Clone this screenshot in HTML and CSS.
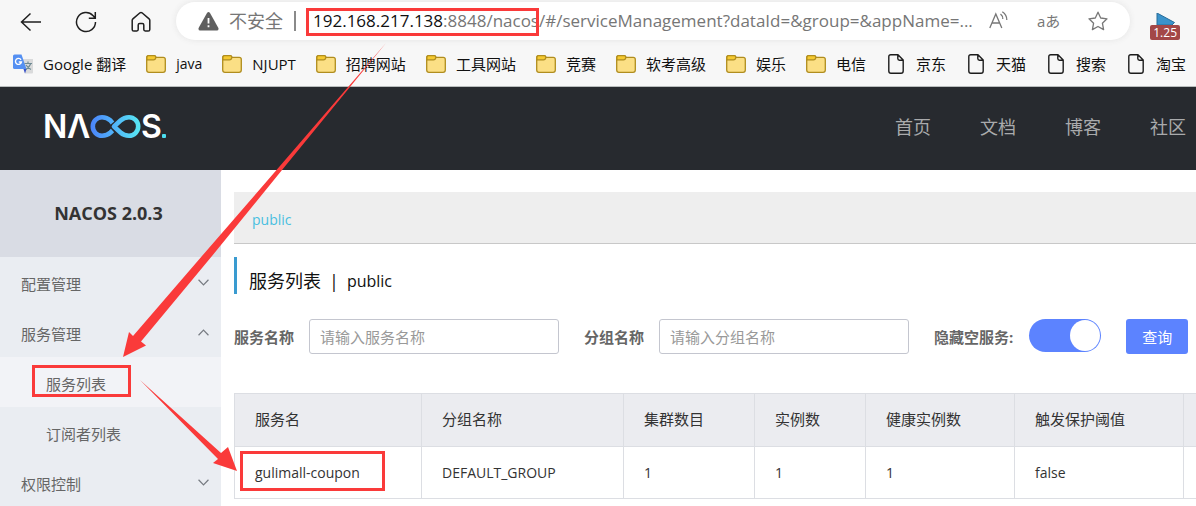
FILE: index.html
```html
<!DOCTYPE html>
<html lang="zh-CN">
<head>
<meta charset="utf-8">
<title>Nacos</title>
<link rel="stylesheet" href="styles.css">
</head>
<body>
<svg class="defs" width="0" height="0" aria-hidden="true">
  <symbol id="folder" viewBox="0 0 20 20">
    <path d="M.7 3.5Q.7 1.6 2.6 1.6H8Q9.6 1.6 10 3.3H17.2Q19.3 3.3 19.3 5.4V16Q19.3 18.4 17 18.4H3Q.7 18.4 .7 16Z" fill="#fbdf85" stroke="#b08d1e" stroke-width="1.3"/>
    <path d="M.9 5.8V3.5Q.9 1.7 2.6 1.7H8Q9.900 1.7 9.800 3.600Q9.500 5.800 7.500 5.800Z" fill="#f5c92f" stroke="#b08d1e" stroke-width="1.2"/>
  </symbol>
  <symbol id="file" viewBox="0 0 20 20">
    <path d="M4.8.8H12L17.2 6V17Q17.2 19.2 15 19.2H5Q2.8 19.2 2.8 17V2.8Q2.8.8 4.8.8ZM11.8.8V4.5Q11.8 6.2 13.5 6.2H17.2" fill="none" stroke="#1c1c1c" stroke-width="1.4" stroke-linejoin="round"/>
  </symbol>
  <symbol id="chevron" viewBox="0 0 10 6">
    <path d="M.5.5L5 5.2L9.5.5" fill="none" stroke="#777b82" stroke-width="1.1"/>
  </symbol>
</svg>

<div class="browser">
  <div class="toolbar">
    <button class="nav-btn" aria-label="返回"><svg width="22" height="22" viewBox="0 0 22 22"><path d="M21 11H1.5M10.500 2.500L1.500 11L10.500 19.500"/></svg></button>
    <button class="nav-btn" aria-label="刷新"><svg width="22" height="22" viewBox="0 0 22 22"><path d="M20.500 11A9.500 9.500 0 1 1 17.900 4.500L19.800 6.600M20.300 1V7.200H13.800"/></svg></button>
    <button class="nav-btn" aria-label="主页"><svg width="22" height="22" viewBox="0 0 22 22"><path d="M2.200 9.300Q2.200 8.500 2.900 7.900L10 1.800Q11 1.100 12 1.800L19.100 7.900Q19.800 8.500 19.800 9.300V18.400Q19.800 20 18.200 20H15.200Q13.800 20 13.800 18.600V14Q13.800 12.500 12.300 12.500H9.700Q8.200 12.500 8.200 14V18.600Q8.200 20 6.800 20H3.800Q2.200 20 2.200 18.400Z"/></svg></button>
    <div class="address">
      <svg width="21" height="19" viewBox="0 0 21 19"><path d="M9 1Q10.500-.8 12 1L20.400 16Q21 18.500 18.800 18.500H2.200Q0 18.500.6 16Z" fill="#5f5f5f"/><path d="M10.500 6V11.500M10.500 13.200V15.200" stroke="#fff" stroke-width="1.800"/></svg>
      <span class="insecure">不安全</span>
      <span class="divider"></span>
      <span class="url"><b>192.168.217.138</b>:8848/nacos/#/serviceManagement?dataId=&amp;group=&amp;appName=...</span>
      <span class="tools">
        <button aria-label="大声朗读"><svg width="20" height="20" viewBox="0 0 20 20"><path d="M.8 17L6.800 3L12.800 17M3 12H10.600M11.500 3Q14 5 13.800 8M13.300.8Q18 4 17.800 9"/></svg></button>
        <button class="translate" aria-label="翻译">aあ</button>
        <button aria-label="收藏"><svg width="20" height="20" viewBox="0 0 20 20"><path d="M10 1.200L12.700 7L19 7.800L14.400 12.200L15.600 18.600L10 15.500L4.400 18.600L5.600 12.200L1 7.800L7.300 7Z" stroke-linejoin="round"/></svg></button>
      </span>
    </div>
    <button class="extension" aria-label="播放速度"><svg width="19" height="12" viewBox="0 0 19 12"><path d="M1 0L18.500 9.500L16 12H1Z" fill="#3a93cb" stroke="#276c99"/></svg><span>1.25</span></button>
  </div>
  <nav class="bookmarks" aria-label="书签">
    <a href="#"><svg width="20" height="20" viewBox="0 0 20 20"><path d="M8 5H20V18.500Q20 19.500 19 19.500H12Z" fill="#d9dadb"/><path d="M1.500.5H8.500L13.500 15H1.500Q0 15 0 13.500V2Q0 .5 1.500.5Z" fill="#5590f2"/><path d="M10.500 15H13.500L12 19.500Z" fill="#3650c8"/><path d="M8 5.800A3 3 0 1 0 8.400 8H5.800" fill="none" stroke="#fff" stroke-width="1.400"/><path d="M11.500 9.500H19M15 7.500V9.500M17.800 9.500Q16.500 13 13 15.500M13 11Q15 14 18 15.500" fill="none" stroke="#6f8b94" stroke-width="1.200"/></svg><span>Google 翻译</span></a>
    <a href="#"><svg width="20" height="20"><use href="#folder"/></svg><span class="small">java</span></a>
    <a href="#"><svg width="20" height="20"><use href="#folder"/></svg><span>NJUPT</span></a>
    <a href="#"><svg width="20" height="20"><use href="#folder"/></svg><span>招聘网站</span></a>
    <a href="#"><svg width="20" height="20"><use href="#folder"/></svg><span>工具网站</span></a>
    <a href="#"><svg width="20" height="20"><use href="#folder"/></svg><span>竞赛</span></a>
    <a href="#"><svg width="20" height="20"><use href="#folder"/></svg><span>软考高级</span></a>
    <a href="#"><svg width="20" height="20"><use href="#folder"/></svg><span>娱乐</span></a>
    <a href="#"><svg width="20" height="20"><use href="#folder"/></svg><span>电信</span></a>
    <a href="#"><svg width="20" height="20"><use href="#file"/></svg><span>京东</span></a>
    <a href="#"><svg width="20" height="20"><use href="#file"/></svg><span>天猫</span></a>
    <a href="#"><svg width="20" height="20"><use href="#file"/></svg><span>搜索</span></a>
    <a href="#"><svg width="20" height="20"><use href="#file"/></svg><span>淘宝</span></a>
  </nav>
</div>

<header class="site-header">
  <svg class="logo" width="130" height="44" viewBox="-3 -8 130 44" role="img" aria-label="NACOS">
    <defs><linearGradient id="loop" gradientUnits="userSpaceOnUse" x1="46" y1="0" x2="95" y2="0"><stop offset="0" stop-color="#4b85fb"/><stop offset="1" stop-color="#58e8f4"/></linearGradient></defs>
    <text x="-2" y="25" class="logo-text">N</text>
    <text x="22" y="25" class="logo-text">Λ</text>
    <text x="96" y="25" class="logo-text">S</text>
    <path d="M67.500 10L65.500 7.500Q62 4.300 57 4.300A9.200 9.200 0 0 0 57 22.700Q62 22.700 65.500 19.500L67.500 17.500" fill="none" stroke="url(#loop)" stroke-width="4.600"/>
    <path d="M69 13.500L75.500 7.500Q79 4.300 84 4.300A9.200 9.200 0 0 1 84 22.700Q79 22.700 75.500 19.500Z" fill="none" stroke="url(#loop)" stroke-width="4.600" stroke-linejoin="round"/>
    <rect x="117" y="21" width="4" height="4" rx="1" fill="#4cdff0"/>
  </svg>
  <nav class="site-nav" aria-label="站点"><a href="#">首页</a><a href="#">文档</a><a href="#">博客</a><a href="#">社区</a></nav>
</header>

<div class="page">
  <aside class="sidebar">
    <h1>NACOS 2.0.3</h1>
    <ul class="menu">
      <li><a href="#">配置管理<svg width="11" height="7"><use href="#chevron"/></svg></a></li>
      <li><a href="#">服务管理<svg class="up" width="11" height="7"><use href="#chevron"/></svg></a>
        <ul>
          <li><a href="#" class="active">服务列表</a></li>
          <li><a href="#">订阅者列表</a></li>
        </ul>
      </li>
      <li><a href="#">权限控制<svg width="11" height="7"><use href="#chevron"/></svg></a></li>
    </ul>
  </aside>
  <main class="content">
    <div class="namespaces"><a href="#">public</a></div>
    <h2><span>服务列表</span><span>|</span><span class="ns">public</span></h2>
    <form class="filters">
      <label for="service">服务名称</label>
      <input id="service" type="text" placeholder="请输入服务名称">
      <label for="group">分组名称</label>
      <input id="group" type="text" placeholder="请输入分组名称">
      <label for="hide">隐藏空服务:</label>
      <input id="hide" class="switch" type="checkbox" checked>
      <button type="button">查询</button>
    </form>
    <table>
      <colgroup><col class="c-name"><col class="c-group"><col class="c-cluster"><col class="c-count"><col class="c-healthy"><col class="c-limit"><col></colgroup>
      <thead><tr><th>服务名</th><th>分组名称</th><th>集群数目</th><th>实例数</th><th>健康实例数</th><th>触发保护阈值</th><th></th></tr></thead>
      <tbody><tr><td>gulimall-coupon</td><td>DEFAULT_GROUP</td><td>1</td><td>1</td><td>1</td><td>false</td><td></td></tr></tbody>
    </table>
  </main>
</div>

<svg class="marks" width="1196" height="506" viewBox="0 0 1196 506" aria-hidden="true">
  <g fill="none" stroke="#fa3a3a" stroke-width="3">
    <rect x="307.500" y="9.500" width="230" height="25"/>
    <rect x="33.500" y="366.500" width="96" height="29"/>
    <rect x="241.500" y="452.500" width="142" height="37"/>
  </g>
  <g fill="#fa3a3a">
    <path d="M386 43L282 170L212 256L141 341.500L146 345.500L123 357L129 332L133 336L202 256L276.500 170Z"/>
    <path d="M140 380L221 453L228 447L237 471L213 463L218 459Z"/>
  </g>
</svg>
</body>
</html>
```
FILE: styles.css
```css
* { box-sizing: border-box; }

body {
  margin: 0;
  font-family: "Open Sans", "Noto Sans CJK SC", sans-serif;
  font-size: 15px;
  line-height: 20px;
  color: #333;
  background: #fff;
  min-height: 100vh;
  display: flex;
  flex-direction: column;
  position: relative;
  overflow: hidden;
}

a { color: inherit; text-decoration: none; }
button { font: inherit; border: 0; padding: 0; background: none; color: inherit; }
svg { display: block; flex: none; }
.defs { position: absolute; }
.small { font-size: 14px; }

.browser {
  background: #f7f7f7;
  border-bottom: 1px solid #b9bdbd;
}
.toolbar {
  display: flex;
  align-items: center;
  gap: 33px;
  height: 44px;
  padding: 0 16px 0 20px;
}
.nav-btn svg { fill: none; stroke: #1f1f1f; stroke-width: 1.5; }
.address {
  flex: 1;
  min-width: 0;
  display: flex;
  align-items: center;
  height: 38px;
  margin: 0 -13px 2px -9px;
  padding: 0 22px;
  border-radius: 19px;
  background: #fff;
  box-shadow: 0 0 6px #e4e4e4;
  color: #767676;
  font-size: 18px;
  line-height: 24px;
  white-space: nowrap;
}
.insecure { margin-left: 10px; }
.divider {
  flex: none;
  width: 2px;
  height: 20px;
  margin: 0 17px 0 11px;
  background: #8a8a8a;
}
.url {
  flex: 1;
  min-width: 0;
  font-size: 17px;
}
.url b { font-weight: 400; color: #111; }
.tools { display: flex; align-items: center; gap: 28px; }
.tools svg { fill: none; stroke: #777; stroke-width: 1.3; }
.translate { font-size: 15px; }
.extension {
  display: flex;
  flex-direction: column;
  align-items: center;
  color: #fff;
  font-size: 12px;
  line-height: 15px;
  padding-top: 8px;
}
.extension span {
  padding: 0 3px;
  border-radius: 2px;
  background: #a34747;
}

.bookmarks {
  display: flex;
  gap: 20px;
  height: 42px;
  padding: 0 0 3px 13px;
  color: #111;
}
.bookmarks a {
  display: flex;
  align-items: center;
  gap: 10px;
  white-space: nowrap;
}

.site-header {
  display: flex;
  align-items: center;
  justify-content: space-between;
  height: 83px;
  padding: 0 10px 3px 42px;
  background: #272a2f;
}
.logo-text {
  font-family: Inter, sans-serif;
  font-size: 32px;
  font-weight: 600;
  fill: #fff;
}
.site-nav {
  display: flex;
  gap: 49px;
  font-size: 18px;
  color: #a9aaac;
}

.page { flex: 1; display: flex; }
.sidebar {
  flex: none;
  width: 221px;
  background: #eaedf2;
}
.sidebar h1 {
  margin: 0;
  height: 87px;
  line-height: 87px;
  background: #d9dce4;
  font-size: 18px;
  text-align: center;
  padding-right: 4px;
}
.menu, .menu ul { list-style: none; margin: 0; padding: 0; }
.menu a {
  display: flex;
  align-items: center;
  justify-content: space-between;
  height: 50px;
  padding: 4px 12px 0 21px;
  color: #666;
}
.menu svg { margin-bottom: 4px; }
.menu ul a { padding-left: 46px; }
.menu .active { background: #f2f3f7; }
.up { transform: rotate(180deg); }

.content {
  flex: 1;
  min-width: 0;
  padding: 22px 0 0 13px;
}
.namespaces {
  height: 52px;
  padding: 0 18px;
  line-height: 55px;
  background: #eee;
  border-bottom: 1px solid #c8c8c8;
  color: #49bfe0;
  font-size: 14px;
}
h2 {
  display: flex;
  align-items: center;
  gap: 8px;
  margin: 13px 0 25px;
  height: 37px;
  padding: 10px 0 0 12px;
  border-left: 3px solid #3a9bd0;
  color: #111;
  font-size: 18px;
  font-weight: 400;
}
.ns { font-size: 16px; }
.filters {
  display: flex;
  align-items: center;
  height: 35px;
  white-space: nowrap;
}
.filters label {
  color: #666;
  font-weight: 700;
  margin-right: 15px;
}
.filters input[type="text"] {
  width: 250px;
  height: 35px;
  margin: 0 25px 0 0;
  padding: 0 10px;
  border: 1px solid #c4c6cf;
  border-radius: 3px;
  font: inherit;
}
.filters ::placeholder { color: #999; }
.filters .switch {
  appearance: none;
  width: 72px;
  height: 33px;
  margin: 0 25px 2px 1px;
  padding: 1px;
  border-radius: 17px;
  background: #5c83ff;
}
.switch::before {
  content: "";
  display: block;
  width: 30px;
  height: 31px;
  margin-left: 40px;
  border-radius: 50%;
  background: #fff;
}
.filters button {
  width: 62px;
  height: 35px;
  border-radius: 3px;
  background: #5c83ff;
  color: #fff;
}

table {
  width: 100%;
  margin-top: 39px;
  border-collapse: collapse;
  table-layout: fixed;
}
th, td {
  height: 52px;
  padding: 0 20px;
  border: 1px solid #dcdee3;
  text-align: left;
  font-weight: 400;
  white-space: nowrap;
}
th { height: 53px; padding-bottom: 2px; background: #ebecf0; }
td { font-size: 14px; }
th:last-child, td:last-child { border-right: 0; padding: 0; }
.c-name { width: 187px; }
.c-group { width: 202px; }
.c-cluster { width: 131px; }
.c-count { width: 111px; }
.c-healthy { width: 149px; }
.c-limit { width: 169px; }

.marks {
  position: absolute;
  top: 0;
  left: 0;
  pointer-events: none;
}
```
